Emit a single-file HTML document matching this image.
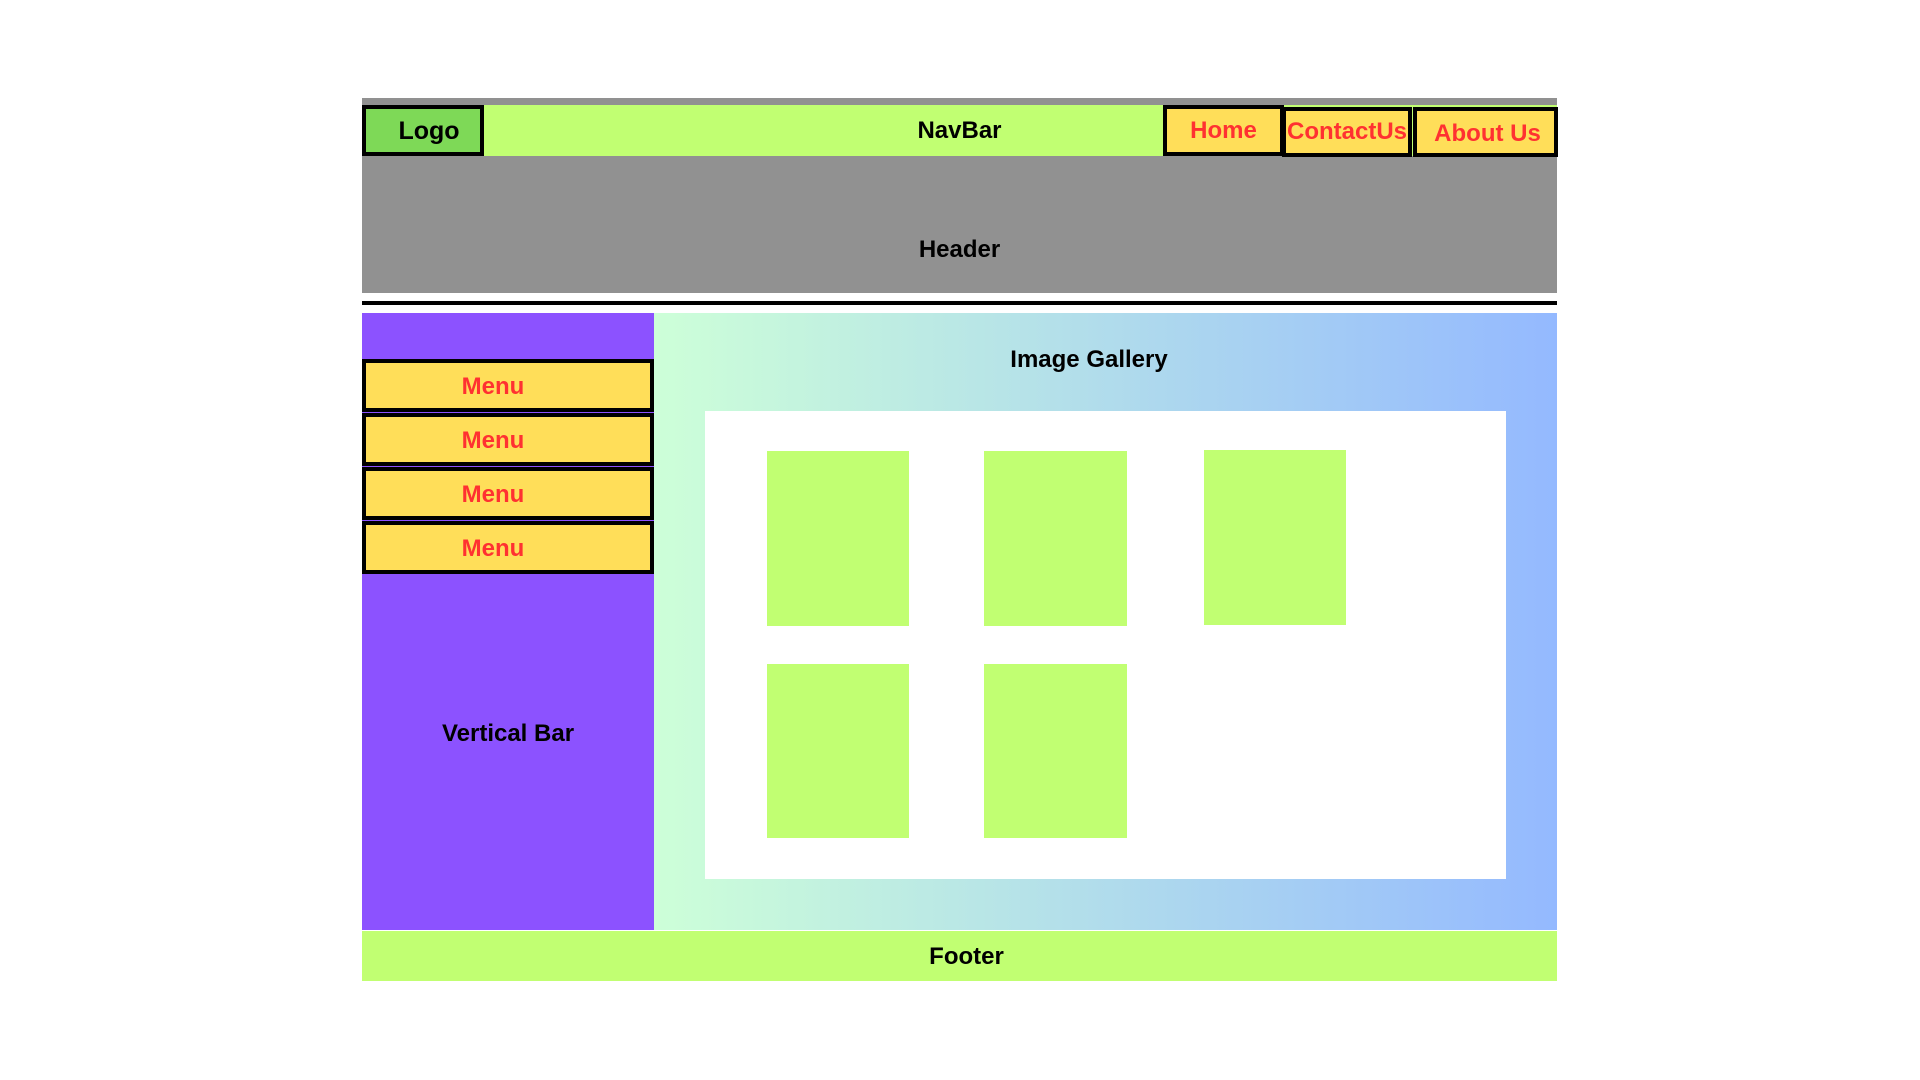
<!DOCTYPE html>
<html><head><meta charset="utf-8"><style>
*{margin:0;padding:0;box-sizing:border-box}
body{width:1920px;height:1080px;background:#fff;position:relative;overflow:hidden;font-family:"Liberation Sans",sans-serif;font-weight:bold}
div{position:absolute}
.t{display:flex;align-items:center;justify-content:center;font-size:24px;color:#000}
.btn{background:#ffde59;border:4px solid #000;color:#ff3131;display:flex;align-items:center;justify-content:center;font-size:24px}
.m{padding-right:30px;padding-top:2px}
.tile{background:#c1ff72}
</style></head><body>
<div style="left:362px;top:98px;width:1195px;height:195px;background:#919191"></div>
<div style="left:362px;top:105px;width:1195px;height:51px;background:#c1ff72"></div>
<div class="t" style="left:362px;top:105px;width:1195px;height:51px">NavBar</div>
<div class="t" style="left:362px;top:105px;width:122px;height:51px;background:#7ed957;border:4px solid #000;font-size:25px;padding-left:12px;padding-top:2px">Logo</div>
<div class="btn" style="left:1163px;top:105px;width:121px;height:51px">Home</div>
<div class="btn" style="left:1282px;top:107px;width:130px;height:50px">ContactUs</div>
<div class="btn" style="left:1413px;top:107px;width:145px;height:50px;padding-top:3px;padding-left:4px">About Us</div>
<div class="t" style="left:362px;top:225px;width:1195px;height:50px">Header</div>
<div style="left:362px;top:301px;width:1195px;height:4px;background:#000"></div>
<div style="left:362px;top:313px;width:292px;height:617px;background:#8c52ff"></div>
<div class="btn m" style="left:362px;top:359px;width:292px;height:53px">Menu</div>
<div class="btn m" style="left:362px;top:413px;width:292px;height:53px">Menu</div>
<div class="btn m" style="left:362px;top:467px;width:292px;height:53px">Menu</div>
<div class="btn m" style="left:362px;top:521px;width:292px;height:53px">Menu</div>
<div class="t" style="left:362px;top:709px;width:292px;height:50px">Vertical Bar</div>
<div style="left:654px;top:313px;width:903px;height:617px;background:linear-gradient(90deg,#cdffd8,#94b9ff)"></div>
<div class="t" style="left:654px;top:335px;width:870px;height:50px">Image Gallery</div>
<div style="left:705px;top:411px;width:801px;height:468px;background:#fff"></div>
<div class="tile" style="left:767px;top:451px;width:142px;height:175px"></div>
<div class="tile" style="left:984px;top:451px;width:143px;height:175px"></div>
<div class="tile" style="left:1204px;top:450px;width:142px;height:175px"></div>
<div class="tile" style="left:767px;top:664px;width:142px;height:174px"></div>
<div class="tile" style="left:984px;top:664px;width:143px;height:174px"></div>
<div class="t" style="left:362px;top:931px;width:1195px;height:50px;background:#c1ff72;padding-left:14px;padding-top:2px">Footer</div>
</body></html>
